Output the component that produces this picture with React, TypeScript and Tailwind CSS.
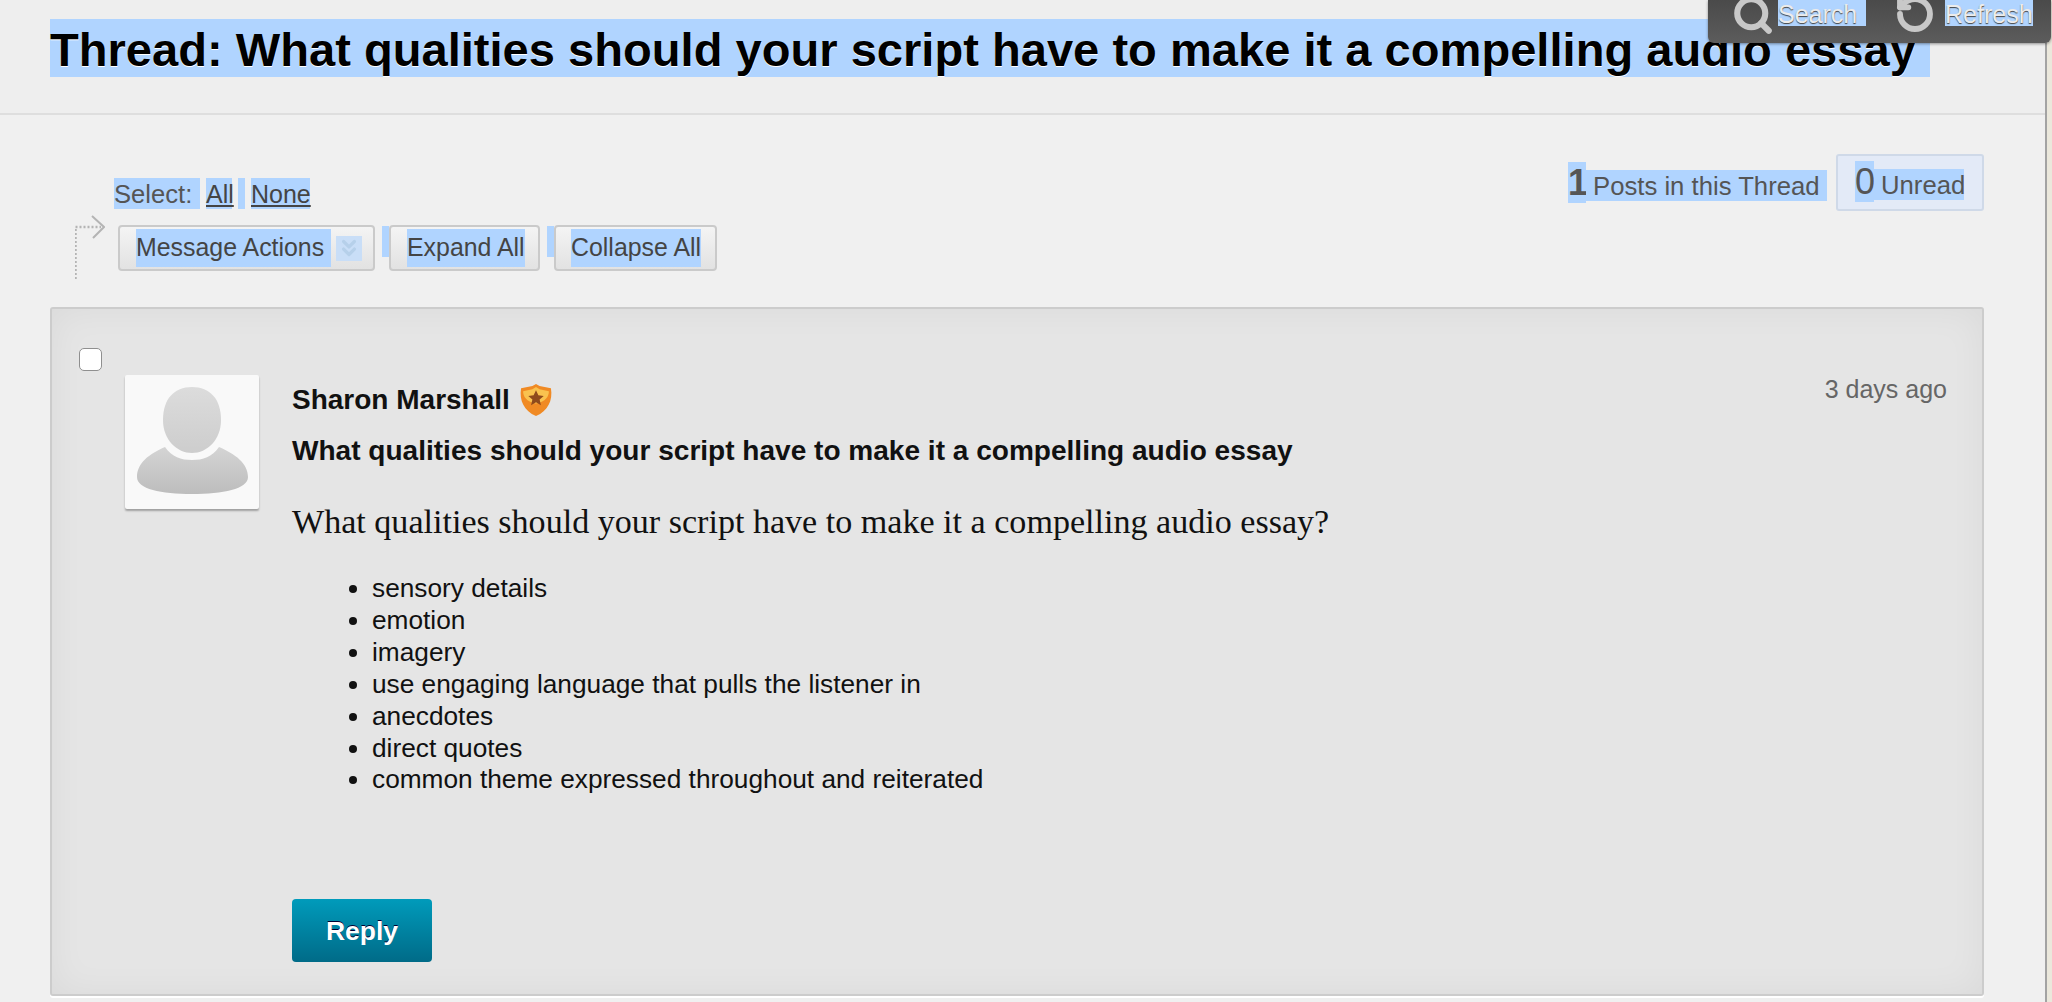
import React from 'react';
import { ChevronsDown, RotateCcw, Search } from 'lucide-react';

const sel = 'bg-[#b0d4ff]';

const ActionButton: React.FC<{ width: string; children: React.ReactNode }> = ({ width, children }) => (
  <div className={`${width} h-[46px] flex items-center justify-start shrink-0 rounded-[4px] border-2 border-[#cacaca] bg-gradient-to-b from-[#f4f4f4] to-[#e2e2e2] text-[#444] text-[24.9px]`}>
    {children}
  </div>
);

const Avatar: React.FC = () => (
  <svg viewBox="0 0 134 134" className="w-full h-full">
    <defs>
      <linearGradient id="head" x1="0" y1="0" x2="0" y2="1">
        <stop offset="0" stopColor="#dcdcdc" />
        <stop offset="1" stopColor="#cdcdcd" />
      </linearGradient>
      <linearGradient id="body" x1="0" y1="0" x2="0" y2="1">
        <stop offset="0" stopColor="#d4d4d4" />
        <stop offset="1" stopColor="#bdbdbd" />
      </linearGradient>
    </defs>
    <path d="M40 72 C24 79 12 88 12 102 C12 114 36 119 67 119 C98 119 123 114 123 102 C123 88 110 79 94 72 C87 82 78 85 67 85 C56 85 47 82 40 72 Z" fill="url(#body)" />
    <path d="M67 12 C49 12 38 24 38 45 C38 65 52 78 67 78 C82 78 96 65 96 45 C96 24 85 12 67 12 Z" fill="url(#head)" />
  </svg>
);

const Badge: React.FC = () => (
  <svg viewBox="0 0 33 33" className="w-[34px] h-[34px] shrink-0">
    <path d="M16.500 1 L20 3 L31 5 C33 17 28 27 16.500 32 C5 27 0 17 2 5 L13 3 Z" fill="#f08a24" />
    <path d="M16.500 4 L20 6 L29 8 C29 13 26 18 16.500 20 C7 18 4 13 4 8 L13 6 Z" fill="#f9c24f" />
    <path d="M16.500 7 L18.800 12 L24 12.500 L20 16 L21.300 21.500 L16.500 18.600 L11.700 21.500 L13 16 L9 12.500 L14.200 12 Z" fill="#8f4a1c" />
  </svg>
);

const items = [
  'sensory details',
  'emotion',
  'imagery',
  'use engaging language that pulls the listener in',
  'anecdotes',
  'direct quotes',
  'common theme expressed throughout and reiterated',
];

export default function App() {
  return (
    <div className="relative w-[2052px] h-[1002px] overflow-hidden flex bg-[#f0f0f0] font-['Liberation_Sans',Arial,sans-serif]">
      <div className="w-[2045px] shrink-0">
        <header className="h-[115px] pl-[50px] pt-[19px] border-b-2 border-[#dedede] bg-[#eeeeee]">
          <h1 className={`w-[1880px] h-[58px] leading-[61px] text-[47.100px] font-bold text-black whitespace-nowrap [text-shadow:0_1px_0_#fff] ${sel}`}>
            Thread: What qualities should your script have to make it a compelling audio essay
          </h1>
        </header>

        <div className="pl-[50px] pr-[61px]">
          <div className="flex justify-between h-[192px] pt-[39px]">
            <div>
              <div className="mt-[24px] ml-[64px] h-[31px] flex text-[25.6px] leading-[33px] text-[#555]">
                <span className={`w-[86px] ${sel}`}>Select:</span>
                <a className={`ml-[6px] w-[26px] text-[25px] underline text-[#444] ${sel}`}>All</a>
                <span className={`ml-[6px] w-[7px] ${sel}`} />
                <a className={`ml-[6px] w-[59px] text-[25px] underline text-[#444] ${sel}`}>None</a>
              </div>
              <div className="flex mt-[16px] h-[46px] pl-[25px]">
                <svg viewBox="0 0 30 64" className="w-[30px] h-[64px] -mt-[10px] shrink-0 mr-[13px]" fill="none" stroke="#b4b4b4">
                  <path d="M0.500 64 V12 H26" strokeWidth="2.500" strokeDasharray="2 2" />
                  <path d="M17 1 L29 12 L18 23" strokeWidth="2" />
                </svg>
                <ActionButton width="w-[257px] pl-[16px]">
                  <span className={`pr-[7px] ${sel}`}>Message Actions</span>
                  <span className="ml-[5px] w-[26px] h-[25px] flex items-center justify-center bg-[#c9def7]">
                    <ChevronsDown size={26} strokeWidth={3} className="text-[#b6d0ea]" />
                  </span>
                </ActionButton>
                <span className={`ml-[7px] w-[7px] h-[31px] mt-[1px] ${sel}`} />
                <ActionButton width="w-[151px] pl-[16px]">
                  <span className={sel}>Expand All</span>
                </ActionButton>
                <span className={`ml-[7px] w-[7px] h-[31px] mt-[1px] ${sel}`} />
                <ActionButton width="w-[163px] pl-[15px]">
                  <span className={sel}>Collapse All</span>
                </ActionButton>
              </div>
            </div>
            <div className="flex items-start text-[#555] text-[25.7px]">
              <div className="flex items-end mt-[8px]">
                <span className={`w-[18px] h-[41px] leading-[42px] text-[36px] font-bold ${sel}`}>1</span>
                <span className={`w-[241px] h-[31px] leading-[33px] pl-[7px] mb-[2px] ${sel}`}>Posts in this Thread</span>
              </div>
              <div className="ml-[9px] w-[148px] h-[57px] rounded-[3px] border-2 border-[#cfd9e8] bg-[#e3eaf7] pl-[17px] pt-[6px] flex items-end pb-[7px]">
                <span className={`w-[19px] h-[41px] leading-[42px] text-[36px] ${sel}`}>0</span>
                <span className={`w-[90px] h-[31px] leading-[33px] pl-[7px] mb-[2px] ${sel}`}>Unread</span>
              </div>
            </div>
          </div>

          <section className="flex h-[689px] rounded-[3px] border-2 border-[#cccccc] bg-[#e5e5e5] pl-[27px] pr-[35px] pt-[39px] shadow-[inset_0_0_36px_rgba(0,0,0,0.05),0_2px_0_#fff]">
            <div className="w-[23px] h-[23px] shrink-0 rounded-[5px] border border-[#8f8f8f] bg-white" />
            <div className="ml-[23px] mt-[27px] w-[134px] h-[134px] shrink-0 rounded-[2px] bg-[#f9f9f9] shadow-[0_2px_2px_rgba(0,0,0,0.3)]">
              <Avatar />
            </div>
            <div className="ml-[33px] flex-1 pt-[35px]">
              <div className="flex justify-between h-[33px]">
                <div className="flex items-center gap-[9px] text-[28px] font-bold text-[#111]">
                  <span>Sharon Marshall</span>
                  <Badge />
                </div>
                <span className="-mt-[10px] h-[33px] leading-[33px] text-[25px] text-[#666]">3 days ago</span>
              </div>
              <h2 className="mt-[19px] h-[32px] leading-[32px] text-[28.05px] font-bold text-[#111] whitespace-nowrap">
                What qualities should your script have to make it a compelling audio essay
              </h2>
              <p className="mt-[37px] h-[36px] leading-[36px] text-[34.1px] text-[#111] font-['Liberation_Serif',Georgia,serif] whitespace-nowrap">
                What qualities should your script have to make it a compelling audio essay?
              </p>
              <ul className="mt-[33px] pl-[80px] list-disc text-[26.25px] leading-[31.900px] text-[#111]">
                {items.map((item) => (
                  <li key={item}>{item}</li>
                ))}
              </ul>
              <button className="mt-[103px] w-[140px] h-[63px] rounded-[4px] bg-gradient-to-b from-[#009bbb] to-[#006b88] text-white text-[26.5px] font-bold pt-[3px] [text-shadow:0_-1px_0_#003]">
                Reply
              </button>
            </div>
          </section>
        </div>
      </div>

      <div className="w-[2px] shrink-0 bg-[#a3a3a3]" />
      <div className="flex-1 bg-[#ebe8dc]" />

      <div className="absolute right-[1px] top-0 w-[343px] h-[43px] overflow-hidden rounded-b-[6px] bg-gradient-to-b from-[#4a4a4a] to-[#5c5c5c] shadow-[0_1px_3px_rgba(0,0,0,0.4)] flex items-start pl-[24px] text-[25px] text-[#ececec]">
        <Search size={42} strokeWidth={3.500} className="text-[#c8c8c8] -mt-[6px] shrink-0" />
        <span className={`ml-[4px] h-[26px] leading-[28px] w-[88px] [text-shadow:0_1px_1px_#444] ${sel}`}>Search</span>
        <RotateCcw size={40} strokeWidth={3.500} className="text-[#c8c8c8] ml-[29px] -mt-[6px] shrink-0" />
        <span className={`ml-[10px] h-[26px] leading-[28px] w-[88px] [text-shadow:0_1px_1px_#444] ${sel}`}>Refresh</span>
      </div>
    </div>
  );
}
